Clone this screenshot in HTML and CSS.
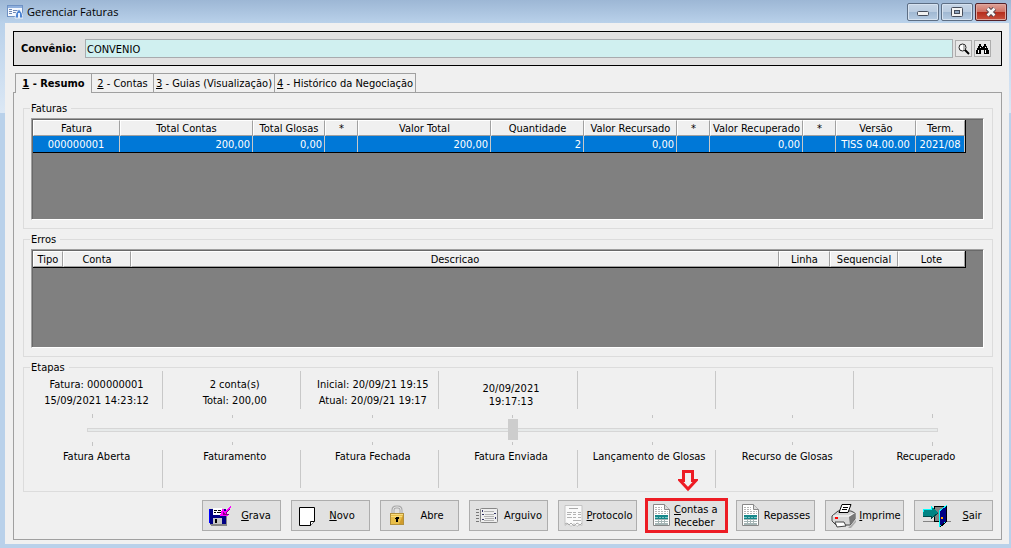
FILE: index.html
```html
<!DOCTYPE html>
<html lang="pt-BR">
<head>
<meta charset="utf-8">
<title>Gerenciar Faturas</title>
<link rel="stylesheet" href="styles.css">
</head>
<body>
<div class="window">
  <header class="titlebar">
    <svg class="app-icon" width="16" height="14" viewBox="0 0 16 14"><rect x=".5" y=".5" width="15" height="11" fill="#f4f8fe" stroke="#6f92c4"/><path d="M1 1h14v2H1z" fill="#8fb0de"/><path d="M2 4.500h3M2 6.500h3M2 8.500h3M6 5.500h5M6 7.500h3" stroke="#6c87b5"/><path d="M8 13l1-5 3-4 3 4 1 5z" fill="#4b83d2" stroke="#fff" stroke-width=".8"/><path d="M11 8h2v5h-2z" fill="#e6f1ff"/></svg>
    <h1 class="title">Gerenciar Faturas</h1>
    <div class="window-controls">
      <button class="wc" aria-label="Minimizar"><svg width="12" height="12" viewBox="0 0 12 12"><rect x=".5" y="5.500" width="11" height="4" rx="1" fill="#f2f2f2" stroke="#464d5b"/></svg></button>
      <button class="wc" aria-label="Maximizar"><svg width="12" height="10" viewBox="0 0 12 10"><rect x=".5" y=".5" width="11" height="9" rx="1" fill="#f4f4f4" stroke="#464d5b"/><rect x="3.500" y="3.500" width="5" height="3" fill="#8ea4bf" stroke="#464d5b"/></svg></button>
      <button class="wc wc-close" aria-label="Fechar"><svg width="12" height="10" viewBox="0 0 12 10"><path d="M2.500 1.500l7 7M9.500 1.500l-7 7" stroke="#53434d" stroke-width="4.500"/><path d="M2.500 1.500l7 7M9.500 1.500l-7 7" stroke="#f6f6f6" stroke-width="2.500"/></svg></button>
    </div>
  </header>
  <main class="client">
    <form class="agreement">
      <label class="agreement-label" for="convenio">Convênio:</label>
      <input class="agreement-input" id="convenio" type="text" value="CONVENIO">
      <button class="tool" type="button" aria-label="Pesquisar"><svg width="12" height="12" viewBox="0 0 12 12"><circle cx="4.500" cy="4.500" r="3.500" fill="#fff" stroke="#222"/><path d="M5 2h2v5H5z" fill="#bbb"/><path d="M7 7l4 4" stroke="#000" stroke-width="2"/></svg></button>
      <button class="tool" type="button" aria-label="Localizar"><svg width="13" height="12" viewBox="0 0 13 12" shape-rendering="crispEdges"><path d="M3 1h2v2h1v1h1V3h1V1h2v2h1v2h1v2h1v4H8V7H5v4H0V7h1V5h1V3h1z"/><path d="M2 7h1v3H2zM4 4h1v1H4zM9 4h1v1H9zM9 7h1v3H9z" fill="#fff"/></svg></button>
    </form>
    <nav class="tabs">
      <button class="tab tab-active"><span><u>1</u> - Resumo</span></button>
      <button class="tab tab-short"><span><u>2</u> - Contas</span></button>
      <button class="tab"><span><u>3</u> - Guias (Visualização)</span></button>
      <button class="tab"><span><u>4</u> - Histórico da Negociação</span></button>
    </nav>
    <section class="page">
      <fieldset class="group group-invoices">
        <legend>Faturas</legend>
        <div class="sheet">
          <table class="grid">
            <colgroup><col class="w87"><col class="w133"><col class="w72"><col class="w33"><col class="w133"><col class="w93"><col class="w93"><col class="w33"><col class="w93"><col class="w33"><col class="w80"><col class="w49"></colgroup>
            <thead><tr><th>Fatura</th><th>Total Contas</th><th>Total Glosas</th><th>*</th><th>Valor Total</th><th>Quantidade</th><th>Valor Recursado</th><th>*</th><th>Valor Recuperado</th><th>*</th><th>Versão</th><th>Term.</th></tr></thead>
            <tbody><tr class="selected"><td class="mid">000000001</td><td>200,00</td><td>0,00</td><td></td><td>200,00</td><td>2</td><td>0,00</td><td></td><td>0,00</td><td></td><td class="mid">TISS 04.00.00</td><td class="mid">2021/08</td></tr></tbody>
          </table>
        </div>
      </fieldset>
      <fieldset class="group group-errors">
        <legend>Erros</legend>
        <div class="sheet">
          <table class="grid">
            <colgroup><col class="w30"><col class="w68"><col class="w648"><col class="w51"><col class="w68"><col class="w67"></colgroup>
            <thead><tr><th>Tipo</th><th>Conta</th><th>Descricao</th><th>Linha</th><th>Sequencial</th><th>Lote</th></tr></thead>
          </table>
        </div>
      </fieldset>
      <fieldset class="group steps">
        <legend>Etapas</legend>
        <div class="step-row">
          <div class="step">Fatura: 000000001<br>15/09/2021 14:23:12</div>
          <div class="step">2 conta(s)<br>Total: 200,00</div>
          <div class="step">Inicial: 20/09/21 19:15<br>Atual: 20/09/21 19:17</div>
          <div class="step step-tight">20/09/2021<br>19:17:13</div>
          <div class="step"></div><div class="step"></div><div class="step"></div>
        </div>
        <div class="track">
          <div class="ticks ticks-top"><i></i><i></i><i></i><i></i><i></i><i></i><i></i></div>
          <input class="slider" type="range" min="0" max="6" value="3" aria-label="Etapa">
          <div class="ticks"><i></i><i></i><i></i><i></i><i></i><i></i><i></i></div>
        </div>
        <div class="step-row step-names">
          <div class="step">Fatura Aberta</div><div class="step">Faturamento</div><div class="step">Fatura Fechada</div><div class="step">Fatura Enviada</div><div class="step">Lançamento de Glosas</div><div class="step">Recurso de Glosas</div><div class="step">Recuperado</div>
        </div>
      </fieldset>
      <div class="actions">
        <button class="action"><svg width="24" height="20" viewBox="0 0 24 20" shape-rendering="crispEdges"><path d="M2 4h17v16H3l-1-1z" fill="#848484"/><path d="M1 3h17v15H2l-1-1z" fill="#000084"/><path d="M1 3h1v14H1z" fill="#00f"/><path d="M5 2h9v7H5z" fill="#fff"/><path d="M6 4h3v1H6zM10 4h3v1h-3zM6 6h2v1H6zM9 6h4v1H9z"/><path d="M5 12h9v6H5z" fill="#c6c6c6"/><path d="M7 13h2v4H7z"/><path d="M14 3h2v2h2V4h1V3h1V2h1V1h1V0h1v2h-1v1h-1v1h-1v1h-1v1h-1v2h2v2h-8V8h1z" fill="#f0f"/><path d="M15 6h1v1h1v1h1V6h1V5h1V4h1V3h1v1h-1v1h-1v1h-1v2h2v1h-6z" fill="#840084"/></svg><span><u>G</u>rava</span></button>
        <button class="action"><svg width="18" height="22" viewBox="0 0 18 22"><path d="M2.500 2.500h15v14l-4 4h-11z" fill="#fff" stroke="#000"/><path d="M17.500 16.500h-4v4" fill="#fff" stroke="#000"/></svg><span><u>N</u>ovo</span></button>
        <button class="action"><svg width="20" height="22" viewBox="0 0 20 22"><path d="M7 10V5q0-3 3-3h2q3 0 3 3v5" fill="none" stroke="#aaa" stroke-width="3"/><path d="M7 10V5q0-3 3-3h2q3 0 3 3v5" fill="none" stroke="#e2e2e2"/><rect x="4.500" y="8.500" width="13" height="11" fill="#e8be48" stroke="#b3913c"/><path d="M5 9.500h12M5 11.500h12" stroke="#f8dc7d"/><path d="M13 19l4-9v9z" fill="#d19c2c"/><path d="M10 12h3v2h-1v3h-2v-3H9v-1h1z"/></svg><span>Abre</span></button>
        <button class="action"><svg width="24" height="16" viewBox="0 0 24 16"><path d="M1 1.500h3M1 4.500h3M1 7.500h3M1 10.500h3M1 13.500h3" stroke="#777"/><rect x="5.500" y=".5" width="17" height="14" rx="1" fill="#eee" stroke="#888"/><path d="M9 3.500h10M10 6.500h9M9 8.500h10M10 10.500h9M9 12.500h10" stroke="#b2b2b2"/><path d="M7 2h1v2H7zM19 5h2v1h-2zM7 6h2v1H7zM20 9h1v2h-1zM7 11h2v1H7z" fill="#333364"/></svg><span>Ar<u>g</u>uivo</span></button>
        <button class="action"><svg width="19" height="22" viewBox="0 0 19 22"><path d="M1 .5h17v20l-2-1-3 2-3-3-3 3-3-3-3 2z" fill="#fafafa" stroke="#c4c4c4"/><path d="M5 3.500h9" stroke="#aaa"/><path d="M3 7.500h5M9 7.500h3M14 7.500h3M3 9.500h4M9 9.500h3M14 9.500h3M3 12.500h5M9 12.500h3M14 12.500h3M9 15.500h8" stroke="#b2b2b2"/><path d="M1 19l2-1 2 2 2-2 3 3 3-3 3 2 2-2" fill="none" stroke="#aaa"/></svg><span><u>P</u>rotocolo</span></button>
        <div class="callout">
          <svg class="arrow" width="20" height="22" viewBox="0 0 20 22"><path d="M5.500 1.500h9v9h3.500l-8 8.500-8-8.500h3.500z" fill="#f0f0f0" stroke="#ed1c24" stroke-width="3"/></svg>
          <button class="action"><svg width="18" height="23" viewBox="0 0 18 23"><path d="M.5 .5h11l5 5v16H.5z" fill="#fff" stroke="#888"/><path d="M11.500 .5v5h5" fill="#ddd" stroke="#888"/><path d="M2 3.500h7M2 5.500h7M2 7.500h13M2 9.500h13" stroke="#b5b5b5" stroke-dasharray="2 1"/><path d="M2 15h13v6H2z" fill="#a5b5b5"/><path d="M2 11h13v4H2z" fill="#16888a"/><path d="M2 13h3v1H2zM6 13h2v1H6zM9 13h2v1H9zM12 13h3v1h-3z" fill="#7cc4c4"/><path d="M2 16h3v1H2zM6 16h2v1H6zM9 16h2v1H9zM12 16h3v1h-3zM2 18h3v1H2zM6 18h2v1H6zM9 18h2v1H9zM12 18h3v1h-3z" fill="#fff"/></svg><span class="action-lines"><u>C</u>ontas a<br>Receber</span></button>
        </div>
        <button class="action"><svg width="18" height="23" viewBox="0 0 18 23"><path d="M.5 .5h11l5 5v16H.5z" fill="#fff" stroke="#888"/><path d="M11.500 .5v5h5" fill="#ddd" stroke="#888"/><path d="M2 3.500h7M2 5.500h7M2 7.500h13M2 9.500h13" stroke="#b5b5b5" stroke-dasharray="2 1"/><path d="M2 15h13v6H2z" fill="#a5b5b5"/><path d="M2 11h13v4H2z" fill="#16888a"/><path d="M2 13h3v1H2zM6 13h2v1H6zM9 13h2v1H9zM12 13h3v1h-3z" fill="#7cc4c4"/><path d="M2 16h3v1H2zM6 16h2v1H6zM9 16h2v1H9zM12 16h3v1h-3zM2 18h3v1H2zM6 18h2v1H6zM9 18h2v1H9zM12 18h3v1h-3z" fill="#fff"/></svg><span>Repasses</span></button>
        <button class="action"><svg width="26" height="24" viewBox="0 0 26 24"><path d="M17 24l8-8v2l-5 6z" fill="#aaa"/><path d="M1 12l6-5h13l4 2v6l-5 6H5l-4-4z" fill="#d6d6d6" stroke="#444"/><path d="M2 12h16l6-3" fill="none" stroke="#fff"/><path d="M18 13l6-4v6l-5 6z" fill="#777"/><path d="M11 .5h9l-3 8H8z" fill="#fff" stroke="#000"/><path d="M12 3.500h5M11 5.500h5" stroke="#000"/><path d="M4 13h3v2H4z" fill="#f00"/><path d="M4 18h9l2 4-9 1z" fill="#fff" stroke="#444"/></svg><span><u>I</u>mprime</span></button>
        <button class="action"><svg width="32" height="22" viewBox="0 0 32 22" shape-rendering="crispEdges"><path d="M3 16h28" stroke="#848484"/><path d="M14 1h12v15H14z" fill="#848484" stroke="#000"/><path d="M19 6l7-5v16l-7 5z" fill="#000084" stroke="#0ff"/><path d="M26 1v16l-6 5" fill="none" stroke="#000"/><path d="M21 12h2v2h-2z" fill="#ffa500"/><path d="M3 4h8V1l7 7-7 6v-3H3z" fill="#008484"/><path d="M3 4h8V1l2 2M3 4v3" fill="none" stroke="#0ff"/><path d="M3 11h8v3l7-6" fill="none" stroke="#004848"/></svg><span><u>S</u>air</span></button>
      </div>
    </section>
  </main>
</div>
</body>
</html>
```
FILE: styles.css
```css
* { box-sizing: border-box; }
body {
  margin: 0;
  color: #000;
  font: 11px/13px "DejaVu Sans Condensed", Tahoma, "Noto Sans", sans-serif;
}
button, input { font: inherit; color: inherit; margin: 0; }
svg { display: block; flex: none; }
.window {
  display: flex;
  flex-direction: column;
  min-height: 100vh;
  padding: 0 2px 4px 5px;
  background: linear-gradient(#9db7d5 0, #b9d1ea 23px, #dce8f5 113px, #b9d1ea 113px);
}
.titlebar { display: flex; align-items: center; height: 23px; padding: 0 2px; }
.app-icon { margin-right: 4px; }
.title { flex: 1; margin: 0; font: 11px/16px "Open Sans", "Noto Sans", sans-serif; }
.window-controls { display: flex; gap: 2px; }
.wc {
  display: flex;
  align-items: center;
  justify-content: center;
  width: 32px;
  height: 18px;
  padding: 0;
  border: 1px solid #5d6e84;
  border-radius: 2px;
  background: linear-gradient(#c6d5e6 0, #b9cbe0 50%, #9fb7d2 50%, #b6cbe2 100%);
  box-shadow: inset 0 0 0 1px #d6e2f0;
}
.wc-close {
  border-color: #54222a;
  background: linear-gradient(#dda299 0, #cf6f62 50%, #b42b1b 50%, #c9523f 100%);
  box-shadow: inset 0 0 0 1px #e0a79e;
}
.client {
  display: flex;
  flex: 1;
  flex-direction: column;
  padding: 8px 7px 4px 8px;
  background: #f0f0f0;
}
.agreement {
  display: flex;
  align-items: center;
  gap: 2px;
  height: 35px;
  margin-bottom: 7px;
  padding: 0 10px 0 7px;
  border: 1px solid #000;
  background: #e1e1e1;
}
.agreement-label { width: 62px; font-weight: bold; }
.agreement-input {
  flex: 1;
  min-width: 0;
  height: 19px;
  padding: 2px 1px 0;
  border: 1px solid #a8abae;
  background: #d0f0f0;
}
.tool {
  display: flex;
  align-items: center;
  justify-content: center;
  width: 17px;
  height: 17px;
  padding: 0;
  border: 1px solid #adadad;
  background: #e8e8e8;
}
.tabs { display: flex; padding-left: 2px; }
.tab {
  height: 19px;
  padding: 0 2px;
  border: 1px solid #a0a0a0;
  border-width: 1px 1px 0 0;
  background: #f0f0f0;
  white-space: nowrap;
}
.tab-short { width: 62px; }
.tab-active {
  width: 77px;
  height: 20px;
  margin-bottom: -1px;
  border-left-width: 1px;
  font-weight: bold;
  z-index: 1;
}
.page {
  display: flex;
  flex: 1;
  flex-direction: column;
  gap: 4px;
  padding: 9px 8px 8px 9px;
  border: 1px solid #a0a0a0;
}
.group {
  min-width: 0;
  margin: 0;
  padding: 3px 8px 8px 7px;
  border: 1px solid #dcdcdc;
}
.group legend { padding: 0 4px 0 1px; height: 13px; margin-left: -1px; }
.group-invoices, .group-errors { display: flex; flex-direction: column; }
.group-invoices { flex: 1 1 120px; }
.group-errors { flex: 1 1 117px; }
.sheet {
  flex: 1;
  min-height: 90px;
  overflow: hidden;
  border: 1px solid;
  border-color: #a0a0a0 #fff #fff #a0a0a0;
  box-shadow: inset 1px 1px #696969;
  padding: 1px;
  background: #808080;
}
.grid {
  width: 933px;
  table-layout: fixed;
  border-collapse: separate;
  border-spacing: 0;
  border: solid #000;
  border-width: 0 1px 1px 0;
}
.grid th, .grid td { height: 16px; overflow: hidden; white-space: nowrap; line-height: 13px; }
.grid th {
  padding: 0;
  border: 1px solid;
  border-color: #fff #a0a0a0 #a0a0a0 #fff;
  background: #f0f0f0;
  font-weight: normal;
}
.grid td { padding: 0 2px; border-right: 1px solid #c8c8c8; text-align: right; }
.grid .mid { text-align: center; }
.selected { background: #0078d7; color: #fff; }
.w30 { width: 30px; }
.w33 { width: 33px; }
.w49 { width: 49px; }
.w51 { width: 51px; }
.w67 { width: 67px; }
.w68 { width: 68px; }
.w72 { width: 72px; }
.w80 { width: 80px; }
.w87 { width: 87px; }
.w93 { width: 93px; }
.w133 { width: 133px; }
.w648 { width: 648px; }
.steps { padding: 0 0 3px; }
.steps legend { margin-left: 6px; }
.step-row {
  display: grid;
  grid-template-columns: repeat(7, 1fr);
  height: 38px;
  margin: -3px 0 0 1px;
  line-height: 16px;
  text-align: center;
  white-space: nowrap;
}
.step { padding: 6px 0 0 6px; border-right: 1px solid #c8c8c8; }
.step:last-child { border-right: 0; }
.step-tight { padding-top: 11px; line-height: 13px; }
.step-names { margin-top: 0; line-height: 13px; }
.step-names .step { padding-top: 0; }
.track { height: 41px; margin: 0 54px 0 63px; padding-top: 5px; }
.ticks { display: flex; justify-content: space-between; height: 4px; padding: 0 5px; }
.ticks i { width: 1px; height: 3px; background: #c4c4c4; }
.ticks i:first-child, .ticks i:last-child { height: 4px; }
.ticks-top { align-items: flex-end; }
.slider {
  display: block;
  width: 100%;
  height: 24px;
  appearance: none;
  background: transparent;
}
.slider::-webkit-slider-runnable-track {
  height: 4px;
  border: 1px solid #d6d6d6;
  background: #e7eaea;
}
.slider::-webkit-slider-thumb {
  appearance: none;
  width: 10px;
  height: 21px;
  margin-top: -10px;
  background: #cdcdcd;
}
.actions { display: flex; justify-content: flex-end; gap: 10px; margin-top: 4px; }
.action {
  display: flex;
  align-items: center;
  width: 79px;
  height: 31px;
  padding: 0 0 0 5px;
  border: 1px solid #adadad;
  background: #e1e1e1;
  white-space: nowrap;
}
.action span { flex: 1; text-align: center; }
.action .action-lines { padding-left: 3px; text-align: left; }
.callout { position: relative; outline: 3px solid #ed1c24; outline-offset: -1px; }
.arrow { position: absolute; left: 31px; top: -30px; }
```
